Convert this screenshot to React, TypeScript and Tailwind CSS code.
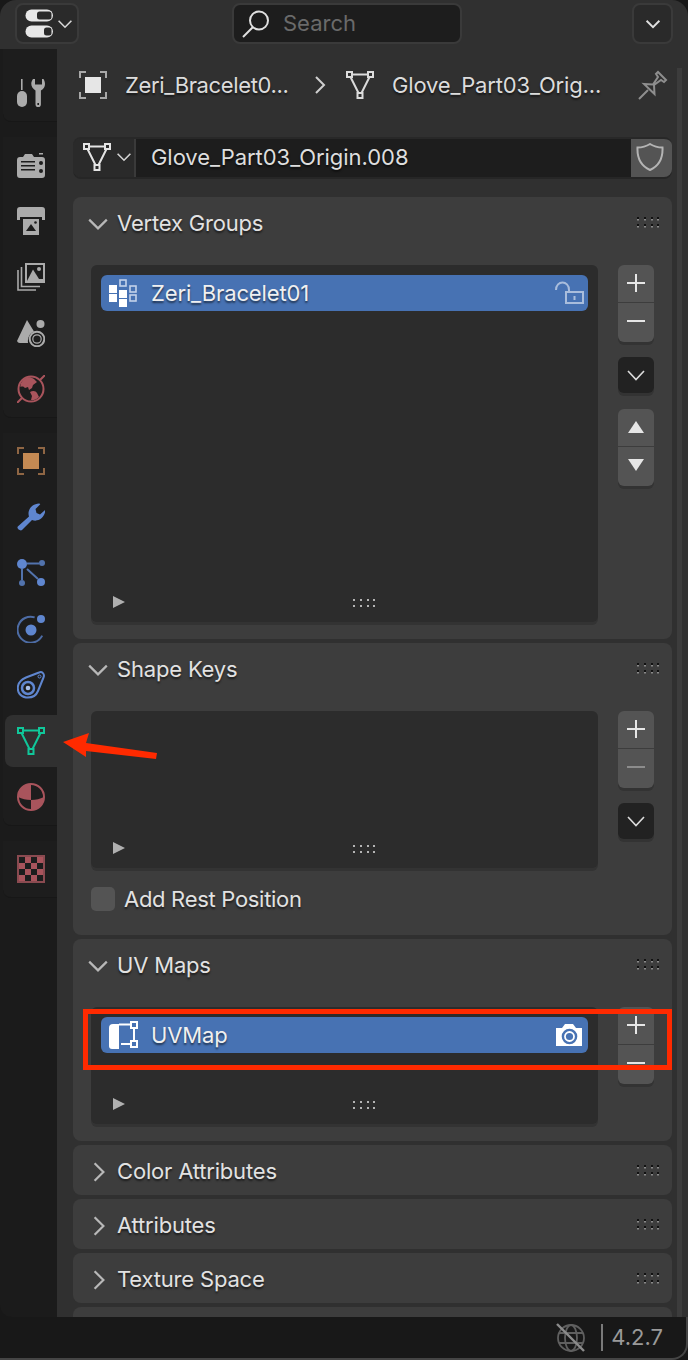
import type { ReactNode } from 'react';

const textShadow = '[text-shadow:0_2px_2px_rgba(0,0,0,0.55)]';

function Ico({ size = 28, vb = 28, children }: { size?: number; vb?: number; children: ReactNode }) {
  return (
    <svg width={size} height={size} viewBox={`0 0 ${vb} ${vb}`} className="block shrink-0" fill="none">
      {children}
    </svg>
  );
}

function Chevron({ dir = 'down', color = '#b8b8b8', size = 20, w = 2 }: { dir?: 'down' | 'right'; color?: string; size?: number; w?: number }) {
  return (
    <svg width={size} height={size} viewBox="0 0 20 20" className="block shrink-0" fill="none">
      <polyline
        points={dir === 'down' ? '2,6 10,14 18,6' : '6,2 14,10 6,18'}
        stroke={color}
        strokeWidth={w}
      />
    </svg>
  );
}

function Grip() {
  const xs = [0, 7, 14, 20];
  return (
    <svg width="22" height="11" viewBox="0 0 22 11" className="block">
      {xs.map((x) =>
        [0, 7].map((y) => (
          <g key={`${x}-${y}`}>
            <rect x={x} y={y + 1.5} width="2" height="2" fill="#8a8a8a" />
            <rect x={x} y={y} width="2" height="2" fill="#111" />
          </g>
        ))
      )}
    </svg>
  );
}

function MeshIcon({ color = '#e0e0e0', size = 28 }: { color?: string; size?: number }) {
  return (
    <Ico size={size}>
      <g stroke={color} strokeWidth="2">
        <rect x="1" y="1" width="5" height="5" />
        <rect x="22" y="1" width="5" height="5" />
        <rect x="11.5" y="22" width="5" height="5" />
        <path d="M6 3.5H22M4.5 6L12.5 22M23.5 6L15.5 22" />
      </g>
    </Ico>
  );
}

function ObjectIcon({ color = '#e6e6e6', corner = '#a8a8a8' }: { color?: string; corner?: string }) {
  return (
    <Ico>
      <rect x="6" y="6" width="16" height="16" fill={color} />
      <path d="M1 7V1H7M21 1H27V7M27 21V27H21M7 27H1V21" stroke={corner} strokeWidth="2" />
    </Ico>
  );
}

const gray = '#ababab';
const red = '#a9545c';
const blue = '#5f86cf';

const tabIcons: Record<string, ReactNode> = {
  tool: (
    <Ico>
      <rect x="4" y="0" width="1.6" height="11" fill={gray} />
      <rect x="0" y="12" width="10" height="16" rx="5" fill={gray} />
      <path
        d="M16 0C13 4 14 9 18.5 11.5V25.5a2.7 2.7 0 0 0 5.4 0V11.5C28.5 9 29 4 26.5 0L25 0V5.5H18V0Z"
        fill={gray}
      />
      <rect x="20.4" y="24" width="1.6" height="2" fill="#1d1d1d" />
    </Ico>
  ),
  render: (
    <Ico>
      <path d="M0 9a3 3 0 0 1 3-3h3l2-3h7l2 3h8a3 3 0 0 1 3 3v15a3 3 0 0 1-3 3H3a3 3 0 0 1-3-3Z" fill={gray} />
      <rect x="22" y="2" width="4" height="1.5" fill={gray} />
      <g fill="#1d1d1d">
        <rect x="4" y="10" width="14" height="1.5" />
        <rect x="4" y="14" width="14" height="1.5" />
        <rect x="4" y="18" width="14" height="1.5" />
        <circle cx="24" cy="12" r="2" />
        <circle cx="24" cy="20" r="2" />
      </g>
    </Ico>
  ),
  output: (
    <Ico>
      <path d="M3 0H25a3 3 0 0 1 3 3V13H25V10H3V13H0V3a3 3 0 0 1 3-3Z" fill={gray} />
      <rect x="6" y="12" width="16" height="16" fill={gray} />
      <path d="M9 24L14 17L19 24Z" fill="#1d1d1d" />
      <circle cx="18.5" cy="15.5" r="1.3" fill="#1d1d1d" />
    </Ico>
  ),
  view: (
    <Ico>
      <path d="M1 7V27H19M4.5 4V23.5H23" stroke={gray} strokeWidth="1.6" />
      <rect x="9" y="1" width="18" height="18" stroke={gray} strokeWidth="2" fill="#1d1d1d" />
      <path d="M10 18L16 6.5L22 16V18Z" fill={gray} />
      <path d="M22 18H26V16H22Z" fill={gray} />
      <circle cx="22" cy="6" r="2" fill={gray} />
    </Ico>
  ),
  scene: (
    <Ico>
      <path d="M10 1L0 22a3 3 0 0 0 3 2H11C10.5 19 12.5 14 17 12.5Z" fill={gray} />
      <circle cx="23.5" cy="5" r="4" fill={gray} />
      <circle cx="20" cy="20" r="7.3" stroke={gray} strokeWidth="2" />
      <circle cx="20" cy="20" r="4.2" stroke={gray} strokeWidth="1.2" />
    </Ico>
  ),
  world: (
    <Ico>
      <circle cx="14" cy="14" r="12.5" stroke={red} strokeWidth="2" />
      <path d="M0 28L5 23M23 5L28 0" stroke={red} strokeWidth="2" />
      <path d="M9 3C5 5 3 9 3.5 12C6 11 7 12 8 13L11 12L12 15L15 13L16 10L20 7L17 4C14 2 11 2 9 3Z" fill={red} />
      <path d="M13 17C16 15 19 16 20 18L22 22C19 25 16 25.5 14 25L15 21Z" fill={red} />
    </Ico>
  ),
  object: <ObjectIcon color="#c48a53" corner="#8f6644" />,
  modifier: (
    <Ico>
      <path
        d="M0.8 23.5L12 13.5C10 8 14 1 22 0.6C23 0.6 23.5 1 23 1.5L18.5 6L19.5 10L23 11.5L27.5 7.5C28 7 28.3 7.5 28.2 8.5C27.5 14.5 21 19.5 15 17L5 27C3.5 28.3 -0.8 26 0.8 23.5Z"
        fill={blue}
      />
    </Ico>
  ),
  particles: (
    <Ico>
      <circle cx="5" cy="5" r="5" fill={blue} />
      <circle cx="25" cy="4" r="3" fill="#5273ad" />
      <circle cx="5" cy="24" r="3" fill="#5273ad" />
      <circle cx="24" cy="23" r="4" fill={blue} />
      <path d="M10 4.5H22M5 10V21M10 10L21 20" stroke="#5273ad" strokeWidth="2" />
    </Ico>
  ),
  physics: (
    <Ico>
      <path d="M16 2A13 13 0 1 0 26 19" stroke="#4d6ca5" strokeWidth="2" transform="rotate(8 14 14)" />
      <circle cx="14" cy="15" r="5.5" fill={blue} />
      <circle cx="24" cy="4" r="4" fill={blue} />
    </Ico>
  ),
  constraint: (
    <Ico>
      <path
        d="M22 1.5C25 0 28 3 26.5 6.5L21 20C19 25 14 27 9 26.5C3 25.5 0 21 1 15C2 10 5.5 8 9 6.5Z"
        stroke={blue}
        strokeWidth="2"
      />
      <circle cx="11" cy="17" r="6" stroke={blue} strokeWidth="2.5" />
      <circle cx="11" cy="17" r="2.3" fill="#a8bfe8" />
      <circle cx="22.5" cy="5.5" r="1.5" stroke={blue} strokeWidth="1" />
    </Ico>
  ),
  data: <MeshIcon color="#10c79a" />,
  material: (
    <Ico>
      <circle cx="14" cy="14" r="13" stroke={red} strokeWidth="2" />
      <path d="M14 1A13 13 0 0 0 1 14C5 16 9 17 14 17Z" fill={red} />
      <path d="M14 17C19 17 23 16 27 14A13 13 0 0 1 14 27Z" fill={red} />
    </Ico>
  ),
  texture: (
    <Ico>
      <rect x="1" y="1" width="26" height="26" fill={red} stroke="#8a4a50" strokeWidth="2" />
      <g fill="#1d1d1d">
        <rect x="2" y="2" width="6" height="6" />
        <rect x="14" y="2" width="6" height="6" />
        <rect x="8" y="8" width="6" height="6" />
        <rect x="20" y="8" width="6" height="6" />
        <rect x="2" y="14" width="6" height="6" />
        <rect x="14" y="14" width="6" height="6" />
        <rect x="8" y="20" width="6" height="6" />
        <rect x="20" y="20" width="6" height="6" />
      </g>
    </Ico>
  ),
};

function Tab({ name, active }: { name: string; active?: boolean }) {
  return (
    <div className="h-[56px] py-[2px]">
      <div className={`h-[52px] ml-[5px] pl-[12px] flex items-center rounded-l-[8px] ${active ? 'bg-[#303030]' : ''}`}>
        {tabIcons[name]}
      </div>
    </div>
  );
}

function TabGroup({ names, first }: { names: string[]; first?: boolean }) {
  return (
    <div className={`bg-[#1d1d1d] rounded-bl-[8px] ml-[3px] border-b border-[#171717] ${first ? 'pt-[16px]' : ''}`}>
      <div className="-ml-[3px]">
        {names.map((n) => (
          <Tab key={n} name={n} active={n === 'data'} />
        ))}
      </div>
    </div>
  );
}

function Sidebar() {
  return (
    <div className="w-[57px] shrink-0 bg-[#1b1b1b] rounded-bl-[12px] flex flex-col gap-[15px]">
      <TabGroup first names={['tool']} />
      <TabGroup names={['render', 'output', 'view', 'scene', 'world']} />
      <TabGroup names={['object', 'modifier', 'particles', 'physics', 'constraint', 'data', 'material']} />
      <TabGroup names={['texture']} />
    </div>
  );
}

function SideButton({ children, pos = 'single', dark }: { children: ReactNode; pos?: 'top' | 'bottom' | 'single'; dark?: boolean }) {
  const shape =
    pos === 'top'
      ? 'rounded-t-[6px] h-[37px] mb-[1px] pb-[2px]'
      : pos === 'bottom'
        ? 'rounded-b-[6px] h-[39px] pb-[3px] shadow-[0_3px_0_#333333]'
        : 'rounded-[6px] h-[36px] shadow-[0_3px_0_#333333]';
  return (
    <div className={`w-[36px] flex items-center justify-center ${shape} ${dark ? 'bg-[#222222]' : 'bg-[#545454]'}`}>
      {children}
    </div>
  );
}

function PlusMinus({ minusDim }: { minusDim?: boolean }) {
  return (
    <div className="flex flex-col">
      <SideButton pos="top">
        <svg width="18" height="18" viewBox="0 0 18 18" className="block">
          <path d="M0 9H18M9 0V18" stroke="#e6e6e6" strokeWidth="2" />
        </svg>
      </SideButton>
      <SideButton pos="bottom">
        <svg width="18" height="18" viewBox="0 0 18 18" className="block">
          <path d="M0 9H18" stroke={minusDim ? '#8c8c8c' : '#e6e6e6'} strokeWidth="2" />
        </svg>
      </SideButton>
    </div>
  );
}

function DownButton() {
  return (
    <SideButton dark>
      <svg width="18" height="11" viewBox="0 0 18 11" className="block mr-[1px]">
        <polyline points="1,1 9,9.5 17,1" fill="none" stroke="#dcdcdc" strokeWidth="1.6" />
      </svg>
    </SideButton>
  );
}

function ListBox({ height, children }: { height: number; children?: ReactNode }) {
  return (
    <div
      className="w-[507px] bg-[#2c2c2c] rounded-[6px] shadow-[0_3px_0_#333333] flex flex-col justify-between pt-[10px] pb-[9px]"
      style={{ height }}
    >
      <div className="px-[10px]">{children}</div>
      <div className="relative h-[22px] flex items-center justify-center">
        <svg width="12" height="12" viewBox="0 0 12 12" className="absolute left-[22px] top-[5px] block">
          <path d="M0 0L12 6L0 12Z" fill="#b0b0b0" />
        </svg>
        <svg width="22" height="9" viewBox="0 0 22 9" className="block mt-[2px] ml-[38px]">
          {[0, 7, 14, 20].map((x) =>
            [0, 6].map((y) => <rect key={`${x}-${y}`} x={x} y={y} width="2" height="2" fill="#b4b4b4" />)
          )}
        </svg>
      </div>
    </div>
  );
}

function ListRow({ icon, label, right }: { icon: ReactNode; label: string; right: ReactNode }) {
  return (
    <div className="h-[36px] bg-[#4772b3] rounded-[6px] flex items-center pl-[8px] pr-[3px]">
      <div className="w-[42px] shrink-0">{icon}</div>
      <span className={`flex-1 text-[22px] tracking-[-0.13px] text-[#f0f0f0] ${textShadow}`}>{label}</span>
      {right}
    </div>
  );
}

function PanelHeader({ title, open }: { title: string; open?: boolean }) {
  return (
    <div className="h-[50px] flex items-center pl-[14px] pr-[13px]">
      <div className="w-[30px] pt-[4px]">
        {open ? <Chevron size={22} /> : <div className="pl-[1px]"><Chevron dir="right" size={22} /></div>}
      </div>
      <span className={`flex-1 pt-[3px] text-[22px] tracking-[-0.18px] text-[#e2e2e2] ${textShadow}`}>{title}</span>
      <Grip />
    </div>
  );
}

function Panel({ title, open, children }: { title: string; open?: boolean; children?: ReactNode }) {
  return (
    <div className="bg-[#3d3d3d] rounded-[8px] shrink-0">
      <PanelHeader title={title} open={open} />
      {children}
    </div>
  );
}

function VertexGroupIcon() {
  return (
    <svg width="30" height="28" viewBox="0 0 30 28" className="block">
      <g fill="#ffffff">
        <rect x="0" y="6" width="8" height="8" />
        <rect x="0" y="15" width="8" height="8" />
        <rect x="10" y="11" width="8" height="8" />
        <rect x="10" y="20" width="8" height="8" />
      </g>
      <g fill="none" stroke="#c3d2ea" strokeWidth="1.6">
        <rect x="11" y="1" width="6" height="6" />
        <rect x="21" y="7" width="6" height="6" />
        <rect x="21" y="16" width="6" height="6" />
      </g>
    </svg>
  );
}

function UvIcon() {
  return (
    <svg width="30" height="28" viewBox="0 0 30 28" className="block">
      <path d="M0 7a4 4 0 0 1 4-4H10V28H3a3 3 0 0 1-3-3Z" fill="#ffffff" />
      <path d="M10 3.5H22M25 7V20M12 23H22" stroke="#ffffff" strokeWidth="2" />
      <rect x="22" y="1" width="6" height="6" fill="none" stroke="#ffffff" strokeWidth="2" />
      <rect x="22" y="20" width="6" height="6" fill="none" stroke="#ffffff" strokeWidth="2" />
    </svg>
  );
}

function Properties() {
  return (
    <div className="flex-1 min-w-0 px-[16px] bg-[#303030]">
      {/* breadcrumb */}
      <div className="h-[40px] mt-[16px] flex items-center pl-[6px]">
        <ObjectIcon />
        <span className={`w-[185px] ml-[18px] text-[22px] tracking-[-0.35px] text-[#dcdcdc] whitespace-nowrap ${textShadow}`}>Zeri_Bracelet0...</span>
        <div className="w-[36px]">
          <Chevron dir="right" color="#d0d0d0" size={20} />
        </div>
        <MeshIcon size={28} color="#dcdcdc" />
        <span className={`ml-[18px] w-[246px] text-[22px] tracking-[-0.15px] text-[#dcdcdc] whitespace-nowrap ${textShadow}`}>Glove_Part03_Orig...</span>
        <svg width="30" height="30" viewBox="0 0 30 30" className="block shrink-0">
          <path
            d="M1 29L10 20M6 14L15 14.5L20 7L18 4L20 2L28 10L26 12L23 10L16 15L16.5 24Z"
            fill="none"
            stroke="#8e8e8e"
            strokeWidth="2"
          />
        </svg>
      </div>
      {/* datablock name */}
      <div className="h-[40px] mt-[32px] flex rounded-[8px] overflow-hidden shadow-[0_2px_0_#262626] border-t-2 border-[#282828]">
        <div className="w-[63px] bg-[#2a2a2a] flex items-center pl-[10px] gap-[5px] pb-[2px] border-r-2 border-[#3a3a3a]">
          <MeshIcon size={28} color="#e4e4e4" />
          <Chevron size={16} color="#d4d4d4" />
        </div>
        <div className={`flex-1 bg-[#1d1d1d] flex items-center pl-[15px] pb-[2px] text-[22px] tracking-[-0.05px] text-[#dedede] ${textShadow}`}>
          Glove_Part03_Origin.008
        </div>
        <div className="w-[41px] bg-[#545454] flex items-center justify-center pr-[3px] pb-[2px]">
          <svg width="28" height="28" viewBox="0 0 28 28" className="block">
            <path
              d="M14 1C10 3.5 6 4.5 1.5 4.5C1 15 5 23 14 27C23 23 27 15 26.5 4.5C22 4.5 18 3.5 14 1Z"
              fill="none"
              stroke="#b4b4b4"
              strokeWidth="2"
            />
          </svg>
        </div>
      </div>
      {/* panels */}
      <div className="mt-[20px] flex flex-col gap-[4px]">
        <Panel title="Vertex Groups" open>
          <div className="flex gap-[20px] pl-[18px] pt-[18px] pb-[17px]">
            <ListBox height={357}>
              <ListRow
                icon={<VertexGroupIcon />}
                label="Zeri_Bracelet01"
                right={
                  <svg width="30" height="24" viewBox="0 0 30 24" className="block">
                    <path d="M1 9C1 -1 14 -1 14 9V12" fill="none" stroke="#a9bddc" strokeWidth="2" />
                    <rect x="11" y="11" width="17" height="11" fill="none" stroke="#a9bddc" strokeWidth="2" />
                    <rect x="18.5" y="15" width="2" height="4" fill="#a9bddc" />
                  </svg>
                }
              />
            </ListBox>
            <div className="flex flex-col gap-[15px]">
              <PlusMinus />
              <DownButton />
              <div className="flex flex-col mt-[1px]">
                <SideButton pos="top">
                  <svg width="16" height="12" viewBox="0 0 16 12" className="block">
                    <path d="M8 0L16 12H0Z" fill="#e6e6e6" />
                  </svg>
                </SideButton>
                <SideButton pos="bottom">
                  <svg width="16" height="12" viewBox="0 0 16 12" className="block">
                    <path d="M0 0H16L8 12Z" fill="#e6e6e6" />
                  </svg>
                </SideButton>
              </div>
            </div>
          </div>
        </Panel>
        <Panel title="Shape Keys" open>
          <div className="flex gap-[20px] pl-[18px] pt-[18px]">
            <ListBox height={157} />
            <div className="flex flex-col gap-[15px]">
              <PlusMinus minusDim />
              <DownButton />
            </div>
          </div>
          <div className="flex items-center pl-[18px] pt-[19px] pb-[24px]">
            <div className="w-[24px] h-[24px] bg-[#545454] rounded-[5px]" />
            <span className={`ml-[9px] text-[22px] tracking-[-0.3px] leading-[24px] text-[#e2e2e2] ${textShadow}`}>Add Rest Position</span>
          </div>
        </Panel>
        <Panel title="UV Maps" open>
          <div className="flex gap-[20px] pl-[18px] pt-[18px] pb-[17px]">
            <ListBox height={117}>
              <ListRow
                icon={<UvIcon />}
                label="UVMap"
                right={
                  <svg width="26" height="23" viewBox="0 0 26 23" className="block mr-[3px]">
                    <path d="M0 4H6L9 0H17L20 4H26V22H0Z" fill="#ffffff" />
                    <circle cx="13.5" cy="12.5" r="6.6" fill="none" stroke="#4772b3" strokeWidth="2.4" />
                    <circle cx="13.5" cy="12.5" r="3.6" fill="#4772b3" />
                  </svg>
                }
              />
            </ListBox>
            <PlusMinus />
          </div>
        </Panel>
        <Panel title="Color Attributes" />
        <Panel title="Attributes" />
        <Panel title="Texture Space" />
        <div className="h-[50px] bg-[#3d3d3d] rounded-[8px] shrink-0" />
      </div>
    </div>
  );
}

function TopBar() {
  return (
    <div className="h-[49px] shrink-0 bg-[#303030] rounded-t-[16px] flex items-start pt-[3px] pl-[15px]">
      <div className="w-[64px] h-[41px] bg-[#2a2a2a] border-2 border-[#3a3a3a] rounded-[8px] flex items-center pl-[8px] gap-[3px]">
        <svg width="29" height="29" viewBox="0 0 29 29" className="block shrink-0">
          <rect x="0.5" y="0.5" width="27.5" height="12" rx="6" fill="#e8e8e8" />
          <rect x="12" y="2.5" width="14.5" height="8" rx="2.5" fill="#2a2a2a" />
          <rect x="0.5" y="16.5" width="27.5" height="12" rx="6" fill="#e8e8e8" />
          <rect x="19" y="18.5" width="7.5" height="8" rx="2.5" fill="#2a2a2a" />
        </svg>
        <Chevron size={16} color="#d8d8d8" />
      </div>
      <div className="ml-[153px] w-[230px] h-[41px] bg-[#1d1d1d] border-2 border-[#3a3a3a] rounded-[8px] flex items-center pl-[8px]">
        <svg width="28" height="28" viewBox="0 0 28 28" className="block">
          <circle cx="17" cy="10.5" r="9" fill="none" stroke="#e0e0e0" strokeWidth="2" />
          <path d="M1 27L11 17" stroke="#e0e0e0" strokeWidth="2" />
        </svg>
        <span className="ml-[13px] text-[22px] text-[#6a6a6a]">Search</span>
      </div>
      <div className="ml-[170px] w-[41px] h-[41px] bg-[#2a2a2a] border-2 border-[#3a3a3a] rounded-[8px] flex items-center justify-center">
        <Chevron size={16} color="#e0e0e0" w={2.4} />
      </div>
    </div>
  );
}

function StatusBar() {
  return (
    <div className="h-[43px] shrink-0 rounded-br-[16px] border-b-2 border-r-2 border-[#454545] flex items-center justify-end pr-[23px] gap-[15px]">
      <svg width="30" height="30" viewBox="0 0 30 30" className="block">
        <g fill="none" stroke="#5f5f5f" strokeWidth="1.8">
          <circle cx="15" cy="15" r="13" />
          <ellipse cx="15" cy="15" rx="6" ry="13" />
          <path d="M3 10H27M3 20H27" />
        </g>
        <path d="M1 1L28 28" stroke="#8c8c8c" strokeWidth="2.4" />
      </svg>
      <div className="flex items-center gap-[8px]">
        <div className="w-[2px] h-[27px] bg-[#7a7a7a]" />
        <span className="text-[22px] text-[#9a9a9a]">4.2.7</span>
      </div>
    </div>
  );
}

export default function App() {
  return (
    <div className="relative w-[688px] h-[1360px] bg-[#181818] overflow-hidden flex flex-col font-['Inter',sans-serif]">
      <TopBar />
      <div className="flex-1 min-h-0 flex overflow-hidden">
        <Sidebar />
        <Properties />
      </div>
      <StatusBar />

      {/* scrollbar */}
      <div className="absolute left-[677px] top-[68px] w-[5px] h-[1249px] bg-[#3c3c3c]" />

      {/* annotations */}
      <div className="absolute left-[83px] top-[1009px] w-[589px] h-[61px] border-[5px] border-[#ff2a00]" />
      <svg width="100" height="30" viewBox="0 0 100 30" className="absolute left-[62px] top-[732px] block">
        <path d="M1 10L27 1L24 11L95 21L94 27L24 19L24 25Z" fill="#ff2a00" />
      </svg>
    </div>
  );
}
